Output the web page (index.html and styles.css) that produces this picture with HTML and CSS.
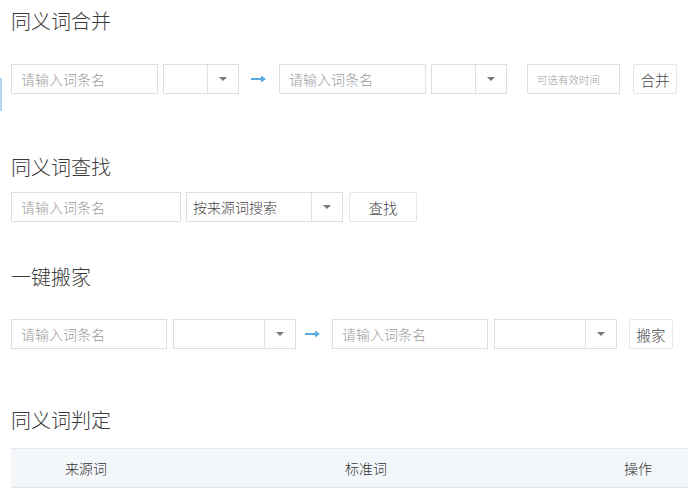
FILE: index.html
```html
<!DOCTYPE html>
<html lang="zh-CN">
<head>
    <meta charset="UTF-8">
    <meta name="viewport" content="width=device-width, initial-scale=1.0">
    <title>同义词管理</title>
    <link rel="stylesheet" href="styles.css">
</head>
<body>
    <div class="side-mark"></div>
    <div class="page">
        <!-- 同义词合并 -->
        <h3 class="section-title first">同义词合并</h3>
        <div class="form-row row-merge">
            <input class="text-input w147" type="text" placeholder="请输入词条名">
            <div class="select w76 ml5">
                <span class="select-value"></span>
                <span class="select-arrow"><i class="caret"></i></span>
            </div>
            <span class="arrow ml12">
                <svg width="15" height="8" viewBox="0 0 15 8"><path d="M0 4H11" stroke="#5aaae2" stroke-width="2"/><path d="M10 0.5L15 4L10 7.5Z" fill="#5aaae2"/></svg>
            </span>
            <input class="text-input w147 ml13" type="text" placeholder="请输入词条名">
            <div class="select w76 ml5">
                <span class="select-value"></span>
                <span class="select-arrow"><i class="caret"></i></span>
            </div>
            <input class="text-input time-input ml20" type="text" placeholder="可选有效时间">
            <button class="btn w44 ml13">合并</button>
        </div>

        <!-- 同义词查找 -->
        <h3 class="section-title find">同义词查找</h3>
        <div class="form-row row-find">
            <input class="text-input w170" type="text" placeholder="请输入词条名">
            <div class="select w157 ml5">
                <span class="select-value">按来源词搜索</span>
                <span class="select-arrow"><i class="caret"></i></span>
            </div>
            <button class="btn w68 ml6">查找</button>
        </div>

        <!-- 一键搬家 -->
        <h3 class="section-title move">一键搬家</h3>
        <div class="form-row row-move">
            <input class="text-input w156" type="text" placeholder="请输入词条名">
            <div class="select w123 ml6">
                <span class="select-value"></span>
                <span class="select-arrow"><i class="caret"></i></span>
            </div>
            <span class="arrow ml9">
                <svg width="15" height="8" viewBox="0 0 15 8"><path d="M0 4H11" stroke="#5aaae2" stroke-width="2"/><path d="M10 0.5L15 4L10 7.5Z" fill="#5aaae2"/></svg>
            </span>
            <input class="text-input w156 ml12" type="text" placeholder="请输入词条名">
            <div class="select w123 ml6">
                <span class="select-value"></span>
                <span class="select-arrow"><i class="caret"></i></span>
            </div>
            <button class="btn w44 ml12">搬家</button>
        </div>

        <!-- 同义词判定 -->
        <h3 class="section-title judge">同义词判定</h3>
        <table class="judge-table">
            <thead>
                <tr>
                    <th class="col-src">来源词</th>
                    <th class="col-std">标准词</th>
                    <th class="col-op">操作</th>
                </tr>
            </thead>
            <tbody>
                <!-- 判定结果 -->
            </tbody>
        </table>
    </div>
</body>
</html>
```

FILE: styles.css
```css
html, body {
    margin: 0;
    padding: 0;
    overflow-x: hidden;
}
body {
    font-family: "Noto Sans CJK SC", "Liberation Sans", sans-serif;
    background-color: #fff;
    color: #333;
}
.side-mark {
    position: absolute;
    left: 0;
    top: 78px;
    width: 2px;
    height: 33px;
    background-color: #b4d6f0;
}
.page {
    padding-left: 11px;
}
.section-title {
    margin: 0;
    font-size: 20px;
    line-height: 28px;
    font-weight: 300;
    color: #3a3a3a;
}
.section-title.first { margin-top: 7px; }
.section-title.find { margin-top: 59px; }
.section-title.move { margin-top: 41px; }
.section-title.judge { margin-top: 57px; }

.form-row {
    display: flex;
    align-items: center;
    height: 30px;
}
.row-merge { margin-top: 29px; }
.row-find { margin-top: 11px; }
.row-move { margin-top: 28px; }

.text-input {
    box-sizing: border-box;
    height: 30px;
    margin: 0;
    padding: 0 9px;
    border: 1px solid #dedede;
    border-radius: 0;
    font-family: inherit;
    font-size: 14px;
    font-weight: 300;
    color: #555;
    background: #fff;
    outline: none;
}
.text-input::placeholder {
    color: #9a9a9a;
}
.time-input {
    width: 93px;
    font-size: 10.5px;
}
.select {
    box-sizing: border-box;
    display: flex;
    height: 30px;
    border: 1px solid #dedede;
    background: #fff;
}
.select-value {
    flex: 1;
    padding-left: 6px;
    font-size: 14px;
    font-weight: 300;
    line-height: 28px;
    color: #444;
}
.select-arrow {
    width: 30px;
    border-left: 1px solid #e2e2e2;
    display: flex;
    align-items: center;
    justify-content: center;
}
.caret {
    width: 0;
    height: 0;
    border-left: 4px solid transparent;
    border-right: 4px solid transparent;
    border-top: 4px solid #777;
}
.arrow {
    display: flex;
    width: 15px;
}
.btn {
    box-sizing: border-box;
    height: 30px;
    margin: 0;
    padding: 0;
    border: 1px solid #e6e6e6;
    border-radius: 2px;
    background: #fff;
    font-family: inherit;
    font-size: 14.5px;
    font-weight: 300;
    color: #444;
    cursor: pointer;
}

.w44 { width: 44px; }
.w68 { width: 68px; }
.w76 { width: 76px; }
.w123 { width: 123px; }
.w147 { width: 147px; }
.w156 { width: 156px; }
.w157 { width: 157px; }
.w170 { width: 170px; }
.ml5 { margin-left: 5px; }
.ml6 { margin-left: 6px; }
.ml9 { margin-left: 9px; }
.ml12 { margin-left: 12px; }
.ml13 { margin-left: 13px; }
.ml20 { margin-left: 20px; }

.judge-table {
    margin-top: 14px;
    width: 694px;
    border-collapse: collapse;
    table-layout: fixed;
}
.judge-table th {
    height: 38px;
    padding: 0;
    background-color: #f4f7fa;
    border-top: 1px solid #e6eaee;
    border-bottom: 1px solid #e3e6e9;
    font-size: 14px;
    font-weight: 300;
    color: #333;
    text-align: center;
}
.col-src { width: 150px; }
.col-std { width: 410px; }
.col-op { width: 134px; }
```
